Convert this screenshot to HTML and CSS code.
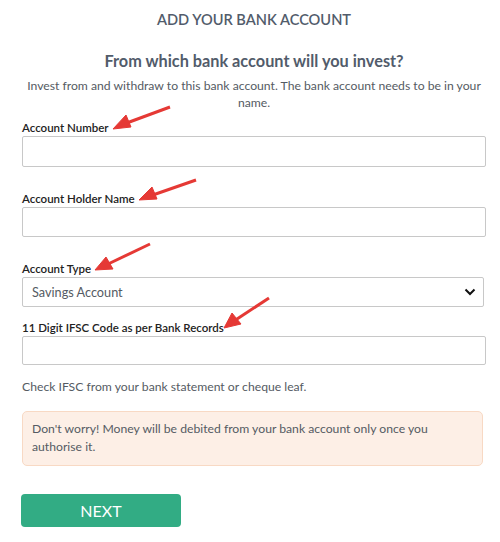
FILE: index.html
```html
<!DOCTYPE html>
<html>
<head>
<meta charset="utf-8">
<link rel="stylesheet" href="styles.css">
</head>
<body>
<div class="page">
  <h1 class="title">ADD YOUR BANK ACCOUNT</h1>
  <h2 class="heading">From which bank account will you invest?</h2>
  <p class="intro">Invest from and withdraw to this bank account. The bank account needs to be in your name.</p>

  <div class="field f1">
    <label class="label">Account Number</label>
    <input class="input h31" type="text">
  </div>
  <div class="field f2">
    <label class="label">Account Holder Name</label>
    <input class="input h30" type="text">
  </div>
  <div class="field f3">
    <label class="label">Account Type</label>
    <div class="select">
      <span>Savings Account</span>
      <svg class="chev" width="12" height="8" viewBox="0 0 12 8"><path d="M1.5 1.5 L6 6 L10.5 1.5" fill="none" stroke="#111" stroke-width="2"/></svg>
    </div>
  </div>
  <div class="field f4">
    <label class="label">11 Digit IFSC Code as per Bank Records</label>
    <input class="input h29" type="text">
  </div>
  <p class="hint">Check IFSC from your bank statement or cheque leaf.</p>
  <div class="alert">Don't worry! Money will be debited from your bank account only once you authorise it.</div>
  <button class="next">NEXT</button>

  <svg class="arrows" width="500" height="542" viewBox="0 0 500 542">
    <g fill="#e53935" stroke="#e53935">
      <line x1="170" y1="107" x2="124" y2="124" stroke-width="3"/>
      <polygon points="113,129 126,115 131,127" stroke-width="1"/>
      <line x1="196" y1="180" x2="150" y2="196" stroke-width="3"/>
      <polygon points="139,200 152,187 157,199" stroke-width="1"/>
      <line x1="150" y1="244" x2="106" y2="265" stroke-width="3"/>
      <polygon points="95,270 106,257 113,269" stroke-width="1"/>
      <line x1="269" y1="298" x2="234" y2="321" stroke-width="3"/>
      <polygon points="224,328 232,313 241,324" stroke-width="1"/>
    </g>
  </svg>
</div>
</body>
</html>
```

FILE: styles.css
```css
* { box-sizing: border-box; }
html, body { margin: 0; padding: 0; background: #fff; }
body { font-family: Lato, "Open Sans", "Liberation Sans", sans-serif; }
.page { position: relative; width: 500px; height: 542px; padding: 10px 14px 0 22px; overflow: hidden; }
.title { margin: 0; text-align: center; font-size: 14.6px; line-height: 20px; font-weight: 600; color: #525c6b; }
.heading { margin: 21px 0 0; text-align: center; font-size: 16.3px; line-height: 20px; font-weight: 700; color: #525c6b; }
.intro { margin: 6px 0 0; text-align: center; font-size: 12.2px; line-height: 17px; color: #555b63; }
.field { display: flex; flex-direction: column; }
.f1 { margin-top: 9px; }
.f2 { margin-top: 24px; }
.f3 { margin-top: 24px; }
.f4 { margin-top: 13px; }
.label { font-size: 11.5px; line-height: 16px; font-weight: 600; color: #222; }
.input { display: block; width: 464px; border: 1px solid #c8c8c8; border-radius: 2px; background: #fff; margin: 0; padding: 0 8px; font: inherit; }
.h31 { height: 31px; }
.h30 { height: 30px; }
.h29 { height: 29px; }
.select { display: flex; align-items: center; justify-content: space-between; width: 462px; height: 30px; border: 1px solid #c8c8c8; border-radius: 2px; padding: 0 7px 0 9px; font-size: 12.7px; color: #555b63; }
.chev { display: block; }
.hint { margin: 13px 0 0; font-size: 12.2px; line-height: 17px; color: #555b63; }
.alert { margin-top: 16px; width: 461px; background: #fdefe6; border: 1px solid #f8d9c4; border-radius: 5px; padding: 8px 9px 9px; font-size: 12.2px; line-height: 18px; color: #555b63; }
.next { display: block; margin: 28px 0 0 -1px; width: 160px; height: 33px; border: none; border-radius: 4px; background: #32ac84; color: #fff; font-family: inherit; font-size: 16px; padding: 0; }
.arrows { position: absolute; left: 0; top: 0; pointer-events: none; }
```
